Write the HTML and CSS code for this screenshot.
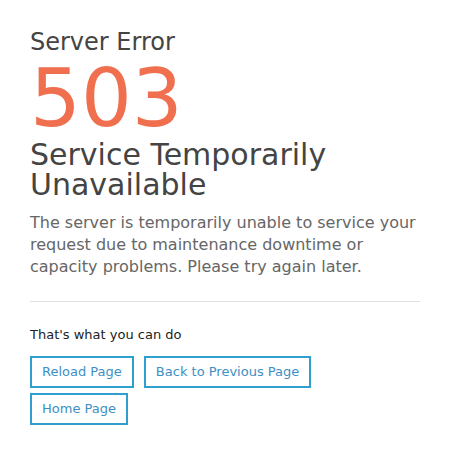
FILE: index.html
```html
<!DOCTYPE html>
<html lang="en">

<head>
    <meta charset="UTF-8">
    <meta name="viewport" content="width=device-width, initial-scale=1.0">
    <title>503 Service Temporarily Unavailable</title>
    <link rel="stylesheet" href="styles.css">
</head>

<body>
    <div class="container">
        <h2 class="error-label">Server Error</h2>
        <div class="error-code">503</div>
        <h1 class="error-title">Service Temporarily Unavailable</h1>
        <p class="error-text">The server is temporarily unable to service your request due to maintenance downtime or capacity problems. Please try again later.</p>

        <hr class="divider">

        <p class="actions-title">That's what you can do</p>
        <div class="actions">
            <a href="#" class="action-button">Reload Page</a>
            <a href="#" class="action-button">Back to Previous Page</a>
            <a href="#" class="action-button">Home Page</a>
        </div>
    </div>
</body>

</html>
```

FILE: styles.css
```css
body {
    font-family: "DejaVu Sans", sans-serif;
    margin: 0;
    padding: 0;
    background-color: #fff;
}

.container {
    padding: 28px 30px 30px;
}

.error-label {
    margin: 0;
    font-size: 24px;
    font-weight: normal;
    line-height: 28px;
    color: #444;
}

.error-code {
    margin-top: 2px;
    font-size: 80px;
    line-height: 82px;
    color: #f06f4f;
}

.error-title {
    margin: 0;
    font-size: 30px;
    font-weight: normal;
    line-height: 30px;
    color: #444;
}

.error-text {
    margin: 12px 0 0;
    font-size: 16px;
    line-height: 22px;
    color: #666;
}

.divider {
    margin: 23px 0 0;
    border: none;
    border-top: 1px solid #e0e0e0;
}

.actions-title {
    margin: 25px 0 0;
    font-size: 13px;
    line-height: 16px;
    color: #222;
}

.actions {
    display: flex;
    flex-wrap: wrap;
    margin-top: 13px;
}

.action-button {
    display: inline-block;
    margin: 0 10px 5px 0;
    padding: 7px 10px;
    font-size: 13px;
    line-height: 14px;
    color: #3d8fc6;
    text-decoration: none;
    border: 2px solid #2e9fcf;
}
```
